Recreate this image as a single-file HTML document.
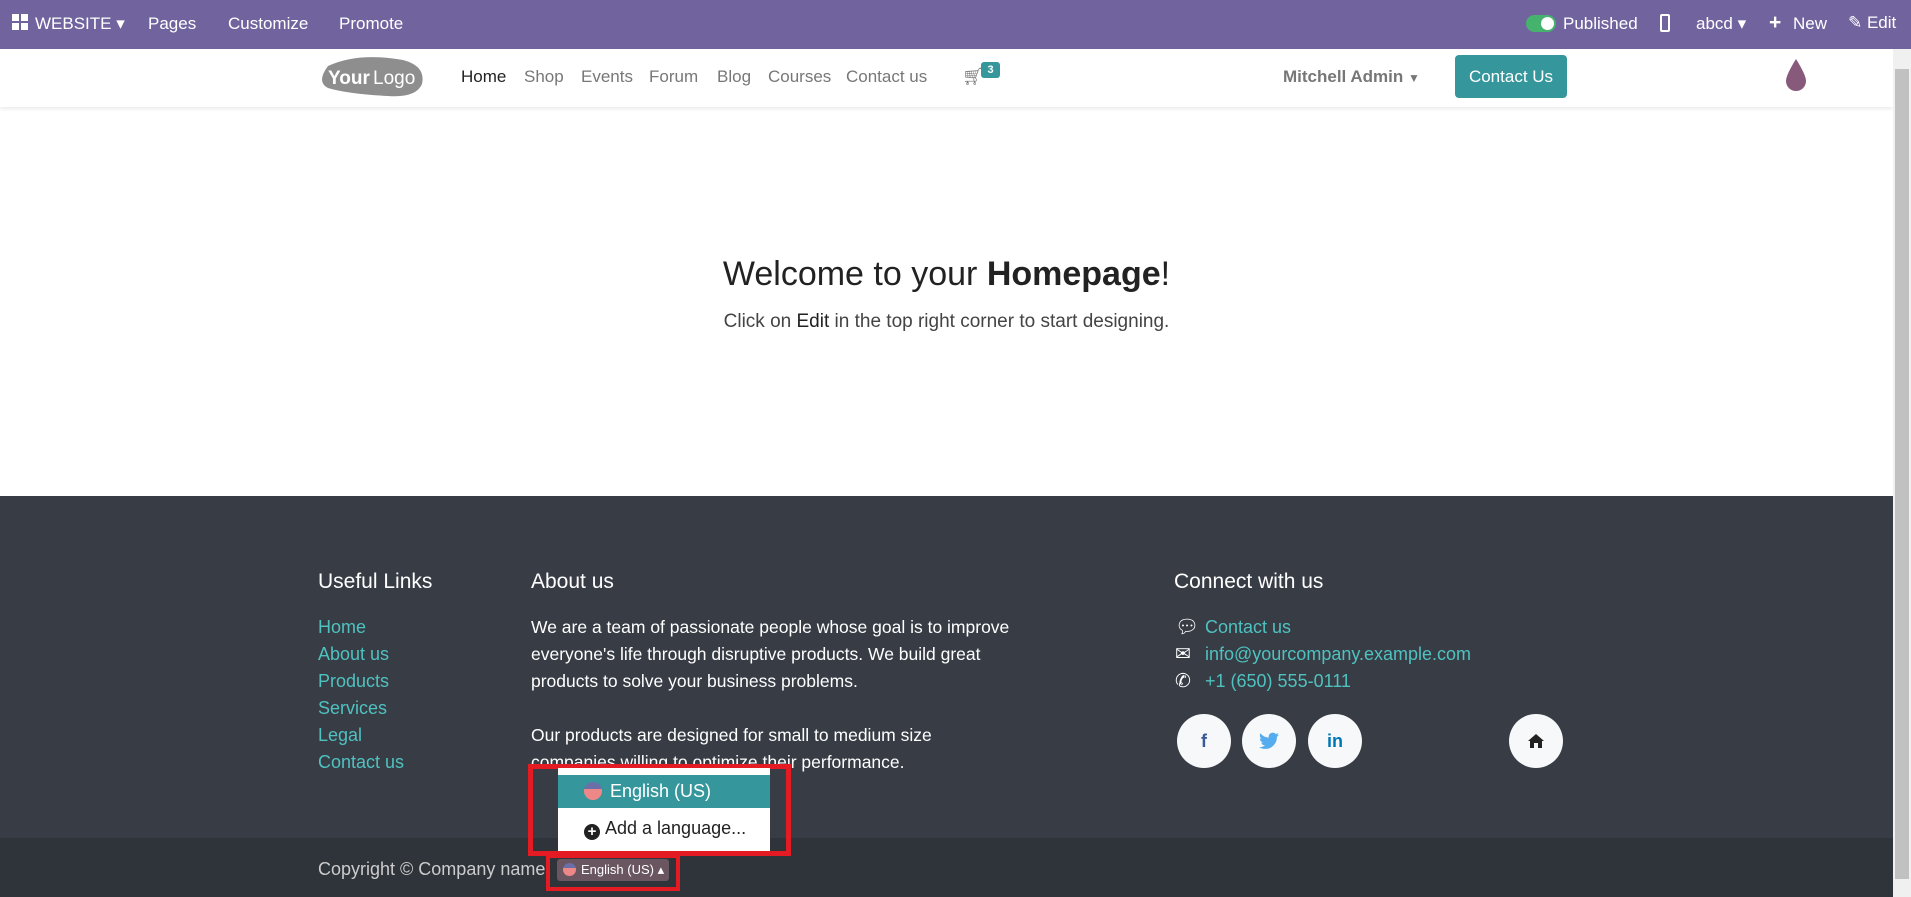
<!DOCTYPE html>
<html><head><meta charset="utf-8"><style>
*{margin:0;padding:0;box-sizing:border-box}
body{width:1911px;height:897px;overflow:hidden;font-family:"Liberation Sans",sans-serif;background:#fff;position:relative}
.a{position:absolute;white-space:nowrap}
#top{position:absolute;left:0;top:0;width:1911px;height:49px;background:#71639e;color:#fff;font-size:17px}
#nav{position:absolute;left:0;top:49px;width:1893px;height:58px;background:#fff;box-shadow:0 2px 4px rgba(0,0,0,.08)}
.nl{font-size:17px;color:#777;top:18px}
#foot{position:absolute;left:0;top:496px;width:1893px;height:342px;background:#373c45;color:#fff}
#band{position:absolute;left:0;top:838px;width:1893px;height:59px;background:#2f333a}
.h{font-size:21px;color:#fff}
.lk{font-size:18px;color:#4fc2c0}
.tx{font-size:17.5px;color:#fff;line-height:27px}
.c{position:absolute;width:54px;height:54px;border-radius:50%;background:#f7f8fa;top:714px;text-align:center;line-height:54px;font-weight:bold;font-size:18px}
</style></head><body>
<div id="top">
 <div class="a" style="left:12px;top:14px;width:16px;height:16px">
  <div style="position:absolute;left:0;top:0;width:7px;height:7px;background:#fff"></div><div style="position:absolute;left:9px;top:0;width:7px;height:7px;background:#fff"></div>
  <div style="position:absolute;left:0;top:9px;width:7px;height:7px;background:#fff"></div><div style="position:absolute;left:9px;top:9px;width:7px;height:7px;background:#fff"></div></div>
 <div class="a" style="left:35px;top:14px">WEBSITE ▾</div>
 <div class="a" style="left:148px;top:14px">Pages</div>
 <div class="a" style="left:228px;top:14px">Customize</div>
 <div class="a" style="left:339px;top:14px">Promote</div>
 <div class="a" style="left:1526px;top:15px;width:30px;height:17px;border-radius:9px;background:#45b36d"><div style="position:absolute;right:2px;top:2px;width:13px;height:13px;border-radius:50%;background:#fff"></div></div>
 <div class="a" style="left:1563px;top:14px">Published</div>
 <div class="a" style="left:1660px;top:14px;width:10px;height:18px;border:2px solid #fff;border-radius:2px"></div>
 <div class="a" style="left:1696px;top:14px">abcd ▾</div>
 <div class="a" style="left:1769px;top:11px;font-size:21px;font-weight:bold">+</div>
 <div class="a" style="left:1793px;top:14px">New</div>
 <div class="a" style="left:1848px;top:13px">✎ Edit</div>
</div>
<div id="nav">
 <div class="a" style="left:318px;top:7px;width:107px;height:42px">
  <svg width="107" height="42"><path d="M10 10 Q40 -4 85 4 Q108 10 104 28 Q98 42 70 40 Q30 38 10 32 Q-2 26 10 10Z" fill="#8e8e8e"/><text x="10" y="28" font-family="Liberation Sans" font-size="19" font-weight="bold" fill="#fff">Your</text><text x="55" y="28" font-family="Liberation Sans" font-size="19" fill="#fff">Logo</text></svg></div>
 <div class="a nl" style="left:461px;color:#222">Home</div>
 <div class="a nl" style="left:524px">Shop</div>
 <div class="a nl" style="left:581px">Events</div>
 <div class="a nl" style="left:649px">Forum</div>
 <div class="a nl" style="left:717px">Blog</div>
 <div class="a nl" style="left:768px">Courses</div>
 <div class="a nl" style="left:846px">Contact us</div>
 <div class="a" style="left:962px;top:18px;font-size:17px;color:#777">🛒︎</div>
 <div class="a" style="left:981px;top:13px;width:19px;height:16px;border-radius:3px;background:#35979c;color:#fff;font-size:11px;font-weight:bold;text-align:center;line-height:16px">3</div>
 <div class="a" style="left:1283px;top:18px;font-size:17px;color:#777;font-weight:bold">Mitchell Admin <span style="font-size:12px">▼</span></div>
 <div class="a" style="left:1455px;top:6px;width:112px;height:43px;border-radius:4px;background:#35979c;color:#fff;font-size:17px;text-align:center;line-height:43px">Contact Us</div>
 <svg class="a" style="left:1782px;top:8px" width="28" height="36"><path d="M14 2 Q4 18 4 24 A10 10 0 0 0 24 24 Q24 18 14 2Z" fill="#875a7b"/></svg>
</div>
<div class="a" style="left:1893px;top:49px;width:18px;height:848px;background:#f0f0f0"><div style="position:absolute;left:2px;top:20px;width:14px;height:810px;background:#c1c1c1"></div></div>
<div class="a" style="left:0;width:1893px;top:255px;text-align:center;font-size:34px;color:#222">Welcome to your <b>Homepage</b>!</div>
<div class="a" style="left:0;width:1893px;top:311px;text-align:center;font-size:19px;color:#444">Click on <span style="color:#222">Edit</span> in the top right corner to start designing.</div>
<div id="foot"></div><div id="band"></div>
<div class="a h" style="left:318px;top:570px">Useful Links</div>
<div class="a" style="left:318px;top:614px;line-height:27px">
 <div class="lk">Home</div><div class="lk">About us</div><div class="lk">Products</div><div class="lk">Services</div><div class="lk">Legal</div><div class="lk">Contact us</div></div>
<div class="a h" style="left:531px;top:570px">About us</div>
<div class="a tx" style="left:531px;top:614px">We are a team of passionate people whose goal is to improve<br>everyone's life through disruptive products. We build great<br>products to solve your business problems.<br><br>Our products are designed for small to medium size<br>companies willing to optimize their performance.</div>
<div class="a h" style="left:1174px;top:570px">Connect with us</div>
<div class="a" style="left:1175px;top:614px;line-height:27px;color:#fff;font-size:19px"><div>💬︎</div><div>✉︎</div><div>✆</div></div>
<div class="a" style="left:1205px;top:614px;line-height:27px"><div class="lk">Contact us</div><div class="lk">info@yourcompany.example.com</div><div class="lk">+1 (650) 555-0111</div></div>
<div class="c" style="left:1177px;color:#3b5998">f</div>
<div class="c" style="left:1242px;color:#55acee"><svg width="20" height="18" viewBox="0 0 24 20" style="vertical-align:-3px"><path d="M24 2.4a10 10 0 0 1-2.8.8A5 5 0 0 0 23.3.4a10 10 0 0 1-3.1 1.2A4.9 4.9 0 0 0 11.8 6 14 14 0 0 1 1.7.9a4.9 4.9 0 0 0 1.5 6.6A4.9 4.9 0 0 1 1 6.9a4.9 4.9 0 0 0 3.9 4.9 5 5 0 0 1-2.2.1 4.9 4.9 0 0 0 4.6 3.4A9.9 9.9 0 0 1 0 17.3 14 14 0 0 0 7.5 19.5c9 0 14-7.5 14-14v-.6A10 10 0 0 0 24 2.4z" fill="#55acee"/></svg></div>
<div class="c" style="left:1308px;color:#0077b5">in</div>
<div class="c" style="left:1509px;color:#222"><svg width="18" height="16" viewBox="0 0 18 16" style="vertical-align:-2px"><path d="M9 1 L1 8 L3 8 L3 15 L7 15 L7 10 L11 10 L11 15 L15 15 L15 8 L17 8Z" fill="#222"/></svg></div>
<div class="a" style="left:528px;top:764px;width:263px;height:92px;border:5px solid #e41b23"></div>
<div class="a" style="left:558px;top:768px;width:212px;height:83px;background:#fff;border-top:5px solid #fff">
 <div style="margin-top:2px;height:33px;background:#35979c;color:#fff;font-size:18px;line-height:33px;padding-left:26px"><span style="display:inline-block;width:18px;height:18px;border-radius:50%;background:linear-gradient(#6a6fa8 40%,#e88 40%);vertical-align:-3px;margin-right:8px"></span>English (US)</div>
 <div style="height:40px;color:#222;font-size:18px;line-height:40px;padding-left:26px"><span style="display:inline-block;width:16px;height:16px;border-radius:50%;background:#222;color:#fff;font-size:15px;line-height:15px;text-align:center;font-weight:bold;vertical-align:-2px;margin-right:5px">+</span>Add a language...</div>
</div>
<div class="a" style="left:318px;top:859px;font-size:18px;color:#ccc">Copyright © Company name</div>
<div class="a" style="left:546px;top:854px;width:134px;height:37px;border:4px solid #e41b23"></div>
<div class="a" style="left:557px;top:859px;width:112px;height:22px;background:#6a5661;border-radius:3px;color:#fff;font-size:13px;line-height:22px;padding-left:6px"><span style="display:inline-block;width:13px;height:13px;border-radius:50%;background:linear-gradient(#6a6fa8 40%,#e88 40%);vertical-align:-2px;margin-right:5px"></span>English (US) ▴</div>
</body></html>
